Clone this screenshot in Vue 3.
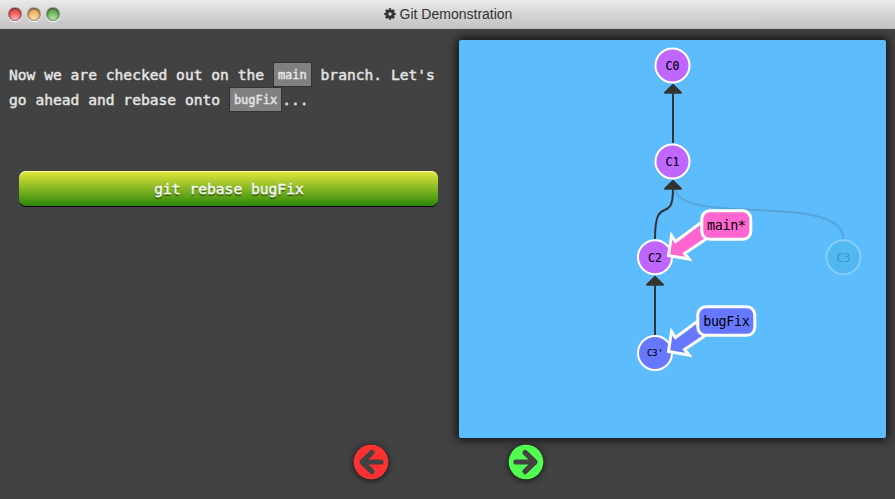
<script setup>
const lights = ['red', 'amber', 'green']
const commits = [
  { id: 'C0', x: 213.5, y: 25.5, fill: '#bf66ff', size: 11.5 },
  { id: 'C1', x: 213.5, y: 121.5, fill: '#bf66ff', size: 11.5 },
  { id: 'C2', x: 196, y: 217.3, fill: '#bf66ff', size: 11.5 },
  { id: "C3'", x: 196, y: 313, fill: '#6678ff', size: 8.8 },
  { id: 'C3', x: 384.5, y: 217.3, fill: '#33b0cc', size: 11.5, faded: true },
]
const heads = [
  { x: 214, y: 43.5 },
  { x: 214, y: 139.5 },
  { x: 196, y: 235.5 },
]
const refs = [
  { name: 'main*', x: 242.8, y: 170.8, w: 49, fill: '#ff66cf', dy: 0 },
  { name: 'bugFix', x: 238.8, y: 266.8, w: 57, fill: '#6678ff', dy: 96 },
]
</script>

<template>
  <div class="window">
    <header class="titlebar">
      <div class="lights"><i v-for="l in lights" :key="l" :class="['light', l]"></i></div>
      <div class="title">
        <svg class="gear" width="12" height="12" viewBox="-6 -6 12 12">
          <g fill="#333">
            <rect v-for="a in 4" :key="a" x="-1.25" y="-5.7" width="2.5" height="11.4" rx=".4" :transform="`rotate(${a * 45})`" />
            <circle r="4.2" />
          </g>
          <circle r="1.7" fill="#d5d5d5" />
        </svg>
        <span>Git Demonstration</span>
      </div>
    </header>
    <main class="body">
      <section class="lesson">
        <p>Now we are checked out on the <code>main</code> branch. Let's<br />go ahead and rebase onto <code>bugFix</code>...</p>
        <button class="command">git rebase bugFix</button>
      </section>
      <section class="canvas">
        <svg width="427" height="398" viewBox="0 0 427 398">
          <g fill="none" stroke="#333" stroke-width="2">
            <path d="M214 103V53" />
            <path d="M196 199C196 151 214 187 214 149" />
            <path d="M196 295V245" />
            <path d="M384.5 199C384.5 151 218 187 216 148" opacity=".17" />
          </g>
          <path v-for="(h, i) in heads" :key="i" :d="`M${h.x} ${h.y}l8.7 8.5q1 1.8-.6 1.8h-16.200q-1.600 0-.6-1.8z`" fill="#333" />
          <g v-for="c in commits" :key="c.id" :opacity="c.faded ? 0.25 : 1">
            <circle :cx="c.x" :cy="c.y" r="17" :fill="c.fill" stroke="#fff" stroke-width="2" />
            <text :x="c.x" :y="c.y + (c.size > 10 ? 4.3 : 3)" :font-size="c.size" :class="{ strong: !c.faded }">{{ c.id }}</text>
          </g>
          <g v-for="r in refs" :key="r.name" :fill="r.fill" stroke="#fff" stroke-width="3">
            <path :transform="`translate(0 ${r.dy})`" d="M247 179L216.500 201.500L212.500 195.500L209.500 215.500L230 219L225.500 213.500L256 193Z" />
            <rect :x="r.x" :y="r.y" :width="r.w" height="28.5" rx="8" />
            <text :x="r.x + r.w / 2" :y="r.y + 19" font-size="13.4" class="label">{{ r.name }}</text>
          </g>
        </svg>
      </section>
    </main>
    <footer class="controls">
      <svg class="nav" width="36" height="36" viewBox="-18 -18 36 36">
        <circle r="17.3" fill="#ff3232" />
        <path d="M10 0H-8M1-9.500L-9 0L1 9.500" />
      </svg>
      <svg class="nav" width="36" height="36" viewBox="-18 -18 36 36">
        <circle r="17.3" fill="#50ff50" />
        <path d="M-10 0H8M-1-9.500L9 0L-1 9.500" />
      </svg>
    </footer>
  </div>
</template>

<style>
body { background: #424242; overflow: hidden; }
</style>

<style scoped>
.window { width: 895px; height: 499px; display: flex; flex-direction: column; background: #424242; overflow: hidden; }
.titlebar { height: 29px; flex: none; display: grid; grid-template-columns: 1fr auto 1fr; background: linear-gradient(#ebe9eb, #d5d5d5 50%, #c1c1c1); }
.lights { display: flex; gap: 5px; padding: 7px 0 0 8px; align-items: flex-start; }
.light { width: 14px; height: 14px; box-sizing: border-box; border-radius: 50%; border: 1px solid #77777799; box-shadow: 0 1px 1px #fff, inset 0 1px 2px #333; }
.red { background: radial-gradient(circle at 50% 100%, #ffc4c4, #f65252 60%); }
.amber { background: radial-gradient(circle at 50% 100%, #ffe7bd, #eeb463 60%); }
.green { background: radial-gradient(circle at 50% 100%, #c0ebb2, #69b556 60%); }
.title { display: flex; align-items: center; gap: 4px; height: 28px; padding-left: 1px; color: #333; font: 14px/28px "Liberation Sans", Arial, sans-serif; }
.gear { display: block; }
.title span { white-space: nowrap; }
.body { flex: none; height: 409px; display: flex; padding-top: 11px; box-sizing: border-box; }
.lesson { width: 440px; margin-right: 19px; padding-top: 22px; box-sizing: border-box; font-family: "DejaVu Sans Mono", monospace; }
p { margin: 0 0 0 9px; color: #e5e5e5; font-size: 14.61px; line-height: 25px; white-space: nowrap; -webkit-text-stroke: .45px #e5e5e5; }
code { display: inline-block; box-sizing: border-box; height: 25px; padding: 0 4px; border: 1px solid #333; background: #808080; font: inherit; font-size: 12px; line-height: 24px; vertical-align: top; }
.command { display: block; width: 419px; height: 35px; margin: 59px 0 0 19px; border: 0; border-radius: 7px; padding: 0 0 0 1px; color: #f5f5f5; font: 14.61px/35px "DejaVu Sans Mono", monospace; -webkit-text-stroke: .45px #f5f5f5; text-shadow: 0 2px 1px #0007; background: linear-gradient(#e2e83b, #2b870b); box-shadow: 0 1px 0 #000, inset 0 1px 0 #f7f5a0; }
.canvas { width: 427px; height: 398px; border-radius: 2px; background: #5cbcfc; box-shadow: 0 0 10px 2px #111; overflow: hidden; }
.canvas svg { display: block; }
text { font-family: "DejaVu Sans Mono", monospace; text-anchor: middle; fill: #000; stroke: none; }
.label { letter-spacing: -.37px; }
.strong { stroke: #000; stroke-width: .15px; }
.controls { display: flex; justify-content: center; gap: 119px; padding: 6px 0 0 1px; }
.nav { display: block; overflow: visible; filter: drop-shadow(0 1px 3px #111); }
.nav path { fill: none; stroke: #424242; stroke-width: 5.2; stroke-linejoin: round; stroke-linecap: round; }
</style>
